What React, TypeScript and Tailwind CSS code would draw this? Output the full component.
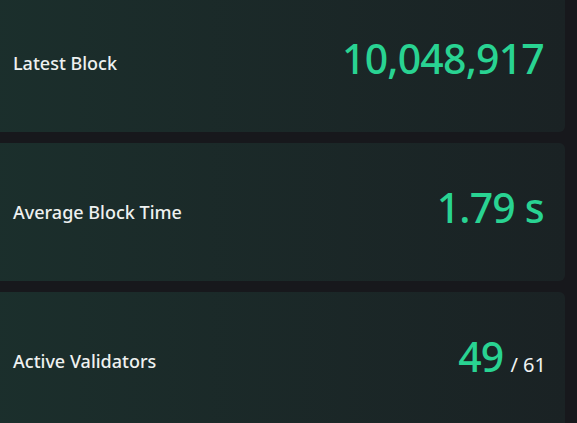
import React from "react";

const cards = [
  { label: "Latest Block", value: "10,048,917" },
  { label: "Average Block Time", value: "1.79 s" },
  { label: "Active Validators", value: "49", suffix: "/ 61" },
];

export default function App() {
  return (
    <div
      className="w-[577px] h-[423px] overflow-hidden bg-[#17181c]"
      style={{ fontFamily: '"Noto Sans", "Open Sans", sans-serif' }}
    >
      <div className="mt-[-6px] ml-[-10px] w-[575px] flex flex-col gap-[11px]">
        {cards.map((c) => (
          <div
            key={c.label}
            className="h-[138px] rounded-md bg-gradient-to-r from-[#1b2f2c] to-[#1a2224] flex items-center justify-between pl-[23px] pr-[21px]"
          >
            <span className="text-[18px] font-medium text-[#eef1f0] mt-[1px]">{c.label}</span>
            <span className="flex items-baseline gap-[7px] mb-[10px]">
              <span className="text-[41px] leading-none font-[550] text-[#29d392] tracking-[-0.8px]">
                {c.value}
              </span>
              {c.suffix && (
                <span className="text-[20px] leading-none font-normal text-[#f1f3f3] mr-[-2px]">{c.suffix}</span>
              )}
            </span>
          </div>
        ))}
      </div>
    </div>
  );
}
